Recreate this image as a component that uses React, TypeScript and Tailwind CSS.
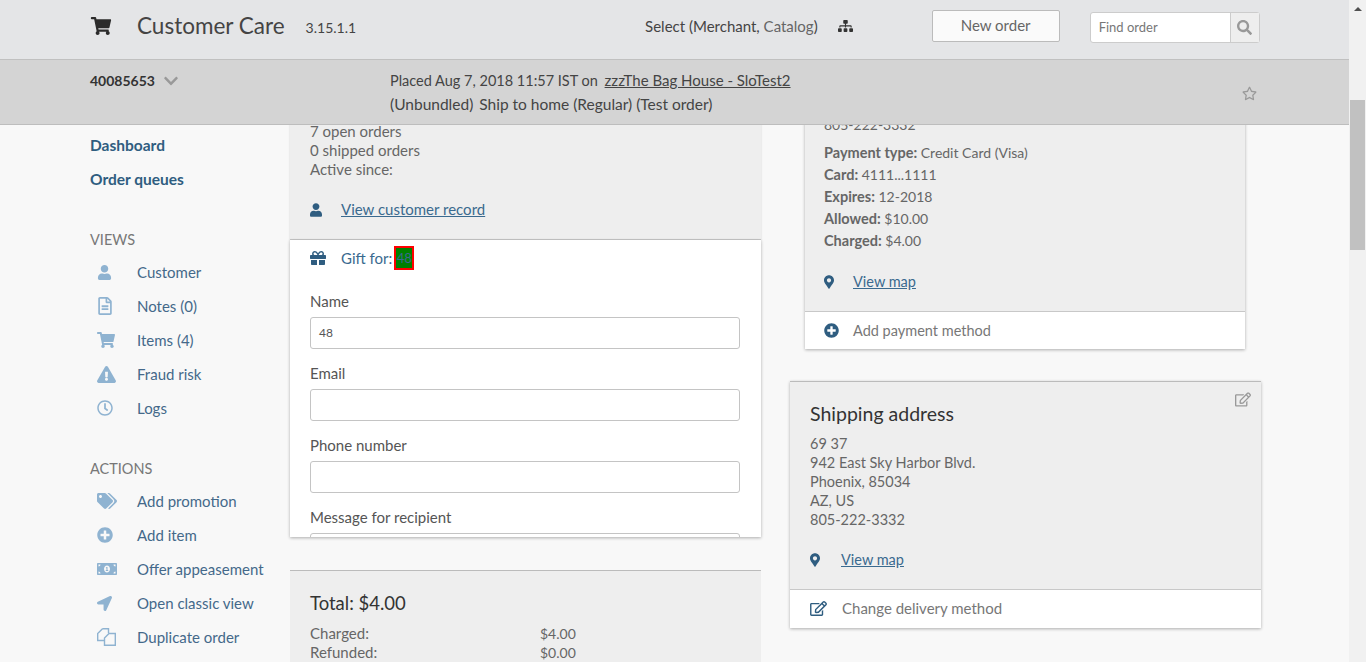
import {
  FaShoppingCart,
  FaSitemap,
  FaSearch,
  FaRegStar,
  FaUser,
  FaRegFileAlt,
  FaExclamationTriangle,
  FaRegClock,
  FaTags,
  FaPlusCircle,
  FaMoneyBillAlt,
  FaLocationArrow,
  FaGift,
  FaMapMarkerAlt,
  FaRegEdit,
  FaChevronDown,
} from 'react-icons/fa'
import type { ComponentType } from 'react'

type NavItem = { label: string; icon: ComponentType<{ className?: string }>; size: string }

// two dog-eared pages, FontAwesome's solid set has no such icon
function FilesIcon({ className }: { className?: string }) {
  return (
    <svg className={className} viewBox="0 0 19 18" fill="none" stroke="currentColor" strokeWidth="1.4">
      <path d="M5.5 .7H11.5V5M5.5 .7L.7 5.5V12.5H7.5" />
      <path d="M12 5.5H18.3V17.3H7.5V10L12 5.5Z" />
    </svg>
  )
}

const views: NavItem[] = [
  { label: 'Customer', icon: FaUser, size: 'h-[15px] w-[15px]' },
  { label: 'Notes (0)', icon: FaRegFileAlt, size: 'h-[18px] w-[16px]' },
  { label: 'Items (4)', icon: FaShoppingCart, size: 'h-[16px] w-[18px]' },
  { label: 'Fraud risk', icon: FaExclamationTriangle, size: 'h-[17px] w-[19px]' },
  { label: 'Logs', icon: FaRegClock, size: 'h-[16px] w-[16px]' },
]

const actions: NavItem[] = [
  { label: 'Add promotion', icon: FaTags, size: 'h-[16px] w-[20px]' },
  { label: 'Add item', icon: FaPlusCircle, size: 'h-[16px] w-[16px]' },
  { label: 'Offer appeasement', icon: FaMoneyBillAlt, size: 'h-[16px] w-[20px]' },
  { label: 'Open classic view', icon: FaLocationArrow, size: 'h-[15px] w-[15px]' },
  { label: 'Duplicate order', icon: FilesIcon, size: 'h-[18px] w-[19px]' },
]

function NavRows({ items }: { items: NavItem[] }) {
  return (
    <div className="mt-[5px] pl-[7px]">
      {items.map((item) => (
        <div key={item.label} className="flex h-[34px] items-center text-[#44698a]">
          <span className="flex w-[40px] shrink-0">
            <item.icon className={`${item.size} text-[#8fb3d1]`} />
          </span>
          {item.label}
        </div>
      ))}
    </div>
  )
}

function Field({ label, value }: { label: string; value?: string }) {
  return (
    <div className="mb-[15px]">
      <div className="h-[19px] leading-[19px] text-[#555]">{label}</div>
      <div className="mt-[6px] flex h-[32px] items-center rounded-[3px] border border-[#c4c4c4] bg-white px-[8px] text-[12px] text-[#555]">
        {value}
      </div>
    </div>
  )
}

export default function App() {
  return (
    <div className="flex h-[662px] overflow-hidden bg-[#f8f8f8] font-['Lato','Liberation_Sans',sans-serif] text-[15px] text-[#666]">
      <div className="flex w-[1349px] shrink-0 flex-col">
        {/* Top bar */}
        <div className="flex h-[60px] shrink-0 items-center border-b border-[#c0c0c0] bg-[#e4e5e7] pb-[8px] pl-[90px] text-[#444]">
          <FaShoppingCart className="h-[18px] w-[22px] text-[#2b2b2b]" />
          <span className="ml-[25px] text-[22.5px] text-[#444]">Customer Care</span>
          <span className="ml-[21px] mt-[4px] text-[14px]">3.15.1.1</span>
          <span className="ml-[289px] mt-[1px]">
            Select (Merchant, <span className="text-[#666]">Catalog</span>)
          </span>
          <FaSitemap className="ml-[20px] h-[14px] w-[15px] text-[#333]" />
          <button className="ml-[79px] h-[32px] w-[128px] rounded-[2px] border border-[#bbb] bg-[#fafafa] text-[#666]">
            New order
          </button>
          <div className="ml-[30px] mt-[3px] flex h-[31px] w-[170px] rounded-[3px] border border-[#ccc] bg-white">
            <span className="flex flex-1 items-center pl-[8px] pt-[1px] text-[13px] text-[#777]">Find order</span>
            <span className="flex w-[29px] items-center justify-center border-l border-[#ccc] bg-[#eee]">
              <FaSearch className="h-[15px] w-[15px] text-[#999]" />
            </span>
          </div>
        </div>

        {/* Order bar */}
        <div className="flex h-[65px] shrink-0 border-b border-[#bdbdbd] bg-[#d4d4d4] pl-[90px]">
          <div className="flex h-[41px] w-[300px] shrink-0 items-center text-[14px] font-bold text-[#333]">
            40085653
            <FaChevronDown className="ml-[8px] h-[16px] w-[16px] text-[#999]" />
          </div>
          <div className="pt-[8px] text-[#444]">
            <div className="h-[24px] text-[14.5px] leading-[24px]">
              Placed Aug 7, 2018 11:57 IST on <span className="ml-[3px] text-[15px] underline">zzzThe Bag House - SloTest2</span>
            </div>
            <div className="h-[24px] text-[15.5px] leading-[24px]">
              (Unbundled) <span className="ml-[2px]">Ship to home (Regular) (Test order)</span>
            </div>
          </div>
          <FaRegStar className="ml-auto mr-[92px] mt-[26px] h-[15px] w-[15px] text-[#999]" />
        </div>

        {/* Page body */}
        <div className="flex min-h-0 flex-1 overflow-hidden pl-[90px]">
          <div className="w-[200px] shrink-0 pt-[4px]">
            <div className="flex h-[34px] items-center text-[15.5px] font-bold text-[#2f5d80]">Dashboard</div>
            <div className="flex h-[34px] items-center text-[15.5px] font-bold text-[#2f5d80]">Order queues</div>
            <div className="mt-[33px] h-[20px] text-[14.5px] leading-[20px] text-[#777]">VIEWS</div>
            <NavRows items={views} />
            <div className="mt-[34px] h-[20px] text-[14.5px] leading-[20px] text-[#777]">ACTIONS</div>
            <NavRows items={actions} />
          </div>

          <div className="w-[471px] shrink-0">
            <div className="-mt-[3px] h-[118px] border-b border-[#c8c8c8] bg-[#eee] pl-[20px] leading-[19px] shadow-[0_1px_2px_rgba(0,0,0,0.15)]">
              <div>7 open orders</div>
              <div>0 shipped orders</div>
              <div>Active since:</div>
              <div className="mt-[21px] flex items-center text-[#3a6a8f]">
                <FaUser className="h-[14px] w-[12px] text-[#2f5d80]" />
                <span className="ml-[19px] underline">View customer record</span>
              </div>
            </div>
            <div className="h-[297px] overflow-hidden bg-white pl-[20px] pr-[21px] pt-[6px] shadow-[0_1px_3px_rgba(0,0,0,0.3)]">
              <div className="flex h-[24px] items-center text-[#3a6a8f]">
                <FaGift className="h-[16px] w-[16px] text-[#2f5d80]" />
                <span className="ml-[15px]">Gift for:</span>
                <span className="ml-[2px] h-[24px] w-[20px] border-2 border-[#f00] bg-[#008000] text-center text-[13px] leading-[20px]">48</span>
              </div>
              <div className="mt-[22px]">
                <Field label="Name" value="48" />
                <Field label="Email" />
                <Field label="Phone number" />
                <Field label="Message for recipient" />
              </div>
            </div>
            <div className="mt-[33px] h-[120px] border-t border-[#bbb] bg-[#eee] pl-[20px] pt-[20px]">
              <div className="text-[18.5px] leading-[24px] text-[#333]">Total: $4.00</div>
              <div className="mt-[9px] flex leading-[19px]">
                <div className="w-[230px]">
                  <div>Charged:</div>
                  <div>Refunded:</div>
                </div>
                <div className="text-[14px]">
                  <div>$4.00</div>
                  <div>$0.00</div>
                </div>
              </div>
            </div>
          </div>

          <div className="ml-[29px] w-[471px] shrink-0">
            <div className="ml-[15px] w-[440px] shadow-[0_1px_3px_rgba(0,0,0,0.3)]">
              <div className="-mt-[10px] h-[197px] border-b border-[#c8c8c8] bg-[#eee] pl-[19px] text-[14px]">
                <div className="h-[19px] leading-[19px]">805-222-3332</div>
                <div className="mt-[8px] leading-[22px]">
                  <div><b className="text-[14.5px] font-bold">Payment type:</b> Credit Card (Visa)</div>
                  <div><b className="text-[14.5px] font-bold">Card:</b> 4111...1111</div>
                  <div><b className="text-[14.5px] font-bold">Expires:</b> 12-2018</div>
                  <div><b className="text-[14.5px] font-bold">Allowed:</b> $10.00</div>
                  <div><b className="text-[14.5px] font-bold">Charged:</b> $4.00</div>
                </div>
                <div className="mt-[19px] flex items-center text-[14.5px] text-[#3a6a8f]">
                  <FaMapMarkerAlt className="h-[14px] w-[10px] text-[#2f5d80]" />
                  <span className="ml-[19px] underline">View map</span>
                </div>
              </div>
              <div className="flex h-[37px] items-center bg-white pl-[19px] text-[14.5px] text-[#777]">
                <FaPlusCircle className="h-[15px] w-[15px] text-[#2f5d80]" />
                <span className="ml-[14px]">Add payment method</span>
              </div>
            </div>

            <div className="relative mt-[32px] shadow-[0_1px_3px_rgba(0,0,0,0.3)]">
              <FaRegEdit className="absolute right-[10px] top-[11px] h-[15px] w-[16px] text-[#999]" />
              <div className="h-[209px] border-t border-b border-t-[#bbb] border-b-[#c8c8c8] bg-[#eee] pl-[20px] pt-[19px]">
                <div className="text-[19.5px] leading-[26px] text-[#333]">Shipping address</div>
                <div className="mt-[7px] text-[14.5px] leading-[19px]">
                  <div>69 37</div>
                  <div>942 East Sky Harbor Blvd.</div>
                  <div>Phoenix, 85034</div>
                  <div>AZ, US</div>
                  <div>805-222-3332</div>
                </div>
                <div className="mt-[20px] flex items-center text-[#3a6a8f]">
                  <FaMapMarkerAlt className="h-[14px] w-[10px] text-[#2f5d80]" />
                  <span className="ml-[21px] text-[14.5px] underline">View map</span>
                </div>
              </div>
              <div className="flex h-[38px] items-center bg-white pb-[2px] pl-[20px] text-[#777]">
                <FaRegEdit className="h-[15px] w-[17px] text-[#2f5d80]" />
                <span className="ml-[15px]">Change delivery method</span>
              </div>
            </div>
          </div>
        </div>
      </div>

      {/* Scrollbar */}
      <div className="flex w-[17px] shrink-0 flex-col bg-[#f1f1f1]">
        <div className="flex h-[17px] items-center justify-center">
          <div className="h-0 w-0 border-x-[4px] border-b-[4px] border-x-transparent border-b-[#505050]" />
        </div>
        <div className="mt-[83px] ml-[1px] h-[150px] w-[15px] bg-[#c1c1c1]" />
      </div>
    </div>
  )
}
